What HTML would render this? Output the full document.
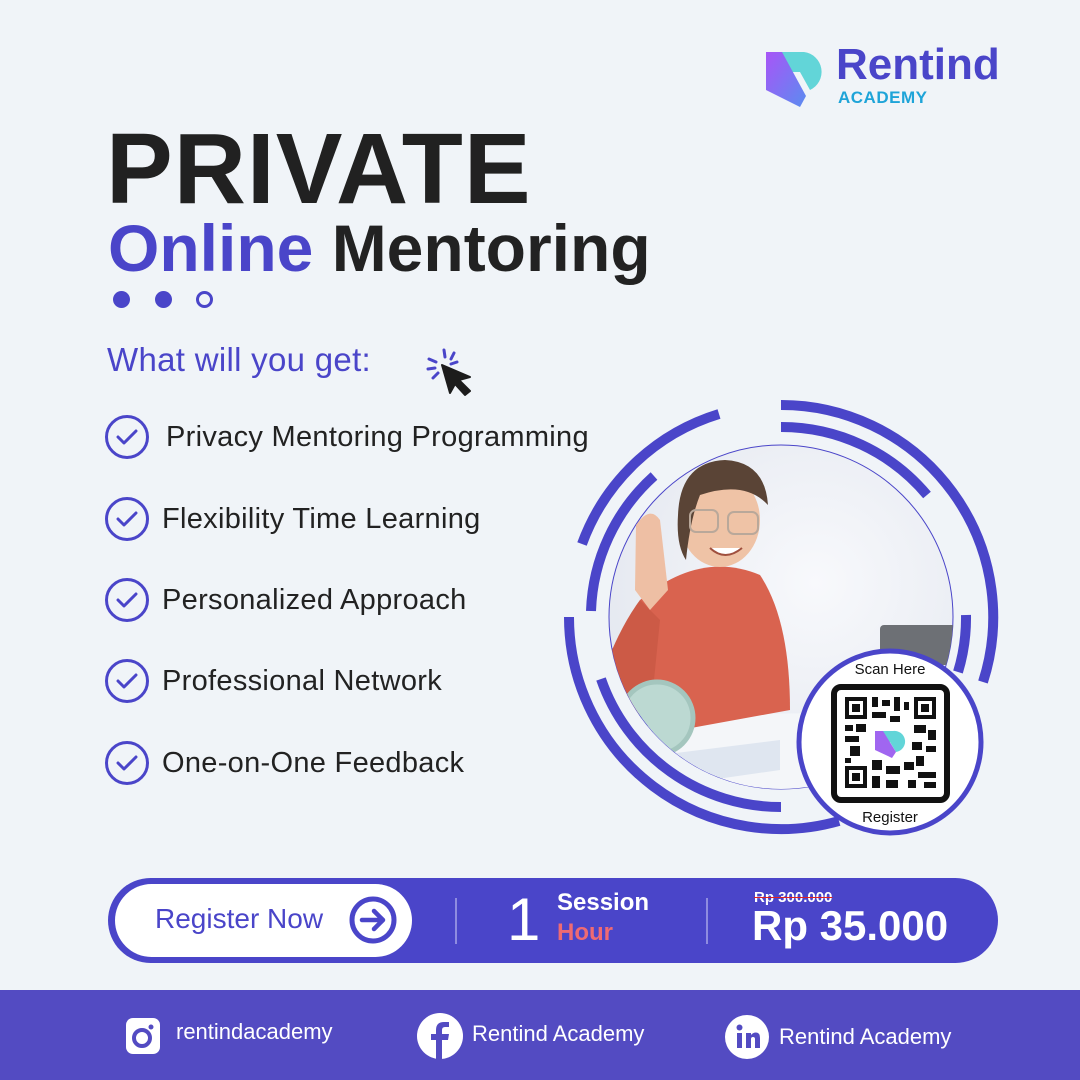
<!DOCTYPE html>
<html><head><meta charset="utf-8"><style>
*{margin:0;padding:0;box-sizing:border-box}
body{width:1080px;height:1080px;background:#f0f4f8;position:relative;overflow:hidden;font-family:"Liberation Sans",sans-serif}
.a{position:absolute;white-space:nowrap}
.item{position:absolute;left:104px;display:flex;align-items:center;font-size:29px;color:#222;letter-spacing:0.3px}
.item svg{margin-right:12px}
</style></head><body>

<!-- logo -->
<svg class="a" style="left:764px;top:50px" width="64" height="58" viewBox="0 0 64 58">
<defs><linearGradient id="lg" x1="0" y1="0" x2="1" y2="1"><stop offset="0" stop-color="#a855f7"/><stop offset="1" stop-color="#5b8cf0"/></linearGradient></defs>
<path d="M14 2 H40 A20 20 0 0 1 46 40 L36 22 H22 Z" fill="#62d5d8"/>
<path d="M2 2 H18 L42 46 L36 57 L2 40 Z" fill="url(#lg)"/>
</svg>
<div class="a" style="left:836px;top:40px;font-size:44px;font-weight:bold;color:#4a45c9">Rentind</div>
<div class="a" style="left:838px;top:88px;font-size:17px;font-weight:bold;color:#1ea4d8;letter-spacing:0.5px">ACADEMY</div>

<div class="a" style="left:106px;top:112px;font-size:100px;font-weight:bold;color:#212121;letter-spacing:1px">PRIVATE</div>
<div class="a" style="left:108px;top:210px;font-size:66px;font-weight:bold;color:#4a45c9;letter-spacing:0">Online <span style="color:#222">Mentoring</span></div>

<div class="a" style="left:113px;top:291px;width:17px;height:17px;border-radius:50%;background:#4a45c9"></div>
<div class="a" style="left:155px;top:291px;width:17px;height:17px;border-radius:50%;background:#4a45c9"></div>
<div class="a" style="left:196px;top:291px;width:17px;height:17px;border-radius:50%;border:3px solid #4a45c9"></div>

<div class="a" style="left:107px;top:341px;font-size:33px;color:#4a45c9;letter-spacing:0.3px">What will you get:</div>
<svg class="a" style="left:424px;top:347px" width="52" height="50" viewBox="0 0 52 50">
<g stroke="#4a45c9" stroke-width="3" stroke-linecap="round"><line x1="20" y1="3" x2="21" y2="10"/><line x1="30" y1="6" x2="27" y2="12"/><line x1="5" y1="12" x2="12" y2="15"/><line x1="4" y1="22" x2="11" y2="21"/><line x1="9" y1="31" x2="14" y2="26"/><line x1="33" y1="15" x2="27" y2="17"/></g>
<path d="M18 18 L46 30 L35 33 L46 44 L41 48 L31 37 L26 46 Z" fill="#1c1c1c" stroke="#1c1c1c" stroke-width="2" stroke-linejoin="round"/>
</svg>

<div class="item" style="top:414px"><svg width="46" height="46" viewBox="0 0 46 46"><circle cx="23" cy="23" r="20.5" fill="none" stroke="#4a45c9" stroke-width="3"/><path d="M14 23 L20 29 L32 17" fill="none" stroke="#4a45c9" stroke-width="3" stroke-linecap="round" stroke-linejoin="round"/></svg><span style="margin-left:4px">Privacy Mentoring Programming</span></div>
<div class="item" style="top:496px"><svg width="46" height="46" viewBox="0 0 46 46"><circle cx="23" cy="23" r="20.5" fill="none" stroke="#4a45c9" stroke-width="3"/><path d="M14 23 L20 29 L32 17" fill="none" stroke="#4a45c9" stroke-width="3" stroke-linecap="round" stroke-linejoin="round"/></svg>Flexibility Time Learning</div>
<div class="item" style="top:577px"><svg width="46" height="46" viewBox="0 0 46 46"><circle cx="23" cy="23" r="20.5" fill="none" stroke="#4a45c9" stroke-width="3"/><path d="M14 23 L20 29 L32 17" fill="none" stroke="#4a45c9" stroke-width="3" stroke-linecap="round" stroke-linejoin="round"/></svg>Personalized Approach</div>
<div class="item" style="top:658px"><svg width="46" height="46" viewBox="0 0 46 46"><circle cx="23" cy="23" r="20.5" fill="none" stroke="#4a45c9" stroke-width="3"/><path d="M14 23 L20 29 L32 17" fill="none" stroke="#4a45c9" stroke-width="3" stroke-linecap="round" stroke-linejoin="round"/></svg>Professional Network</div>
<div class="item" style="top:740px"><svg width="46" height="46" viewBox="0 0 46 46"><circle cx="23" cy="23" r="20.5" fill="none" stroke="#4a45c9" stroke-width="3"/><path d="M14 23 L20 29 L32 17" fill="none" stroke="#4a45c9" stroke-width="3" stroke-linecap="round" stroke-linejoin="round"/></svg>One-on-One Feedback</div>

<!-- rings + photo -->
<svg class="a" style="left:0;top:0" width="1080" height="1080" viewBox="0 0 1080 1080">
<defs>
<clipPath id="pc"><circle cx="781" cy="617" r="172"/></clipPath>
<radialGradient id="bgp" cx="0.6" cy="0.4" r="0.7"><stop offset="0" stop-color="#f8f9fc"/><stop offset="1" stop-color="#e3e7ef"/></radialGradient>
</defs>
<circle cx="781" cy="617" r="172" fill="url(#bgp)" stroke="#4a45c9" stroke-width="1"/>
<g clip-path="url(#pc)">
<rect x="880" y="625" width="80" height="40" rx="4" fill="#6d7075"/>
<path d="M600 740 Q700 700 960 720 L960 800 L600 800Z" fill="#f4f6f9"/>
<path d="M620 760 L780 740 L780 770 L640 790Z" fill="#dfe6f0"/>
<path d="M640 600 Q700 550 760 575 Q790 620 790 710 L680 730 Q630 720 610 680 Z" fill="#d9634f"/>
<path d="M640 600 Q625 620 612 650 L612 700 L650 720 L660 620Z" fill="#cc5a46"/>
<path d="M636 525 Q650 505 660 520 L668 590 L650 610 L635 590Z" fill="#eebfa4"/>
<ellipse cx="720" cy="520" rx="40" ry="47" fill="#efc3a6"/>
<path d="M678 515 Q680 462 725 460 Q765 462 768 505 Q745 480 700 495 Q690 520 686 560 Q676 545 678 515Z" fill="#5a4436"/>
<rect x="690" y="510" width="28" height="22" rx="6" fill="none" stroke="#b9a89a" stroke-width="2"/>
<rect x="728" y="512" width="30" height="22" rx="6" fill="none" stroke="#b9a89a" stroke-width="2"/>
<path d="M710 548 Q725 562 742 548" fill="#fff" stroke="#a0503e" stroke-width="2"/>
<circle cx="657" cy="718" r="36" fill="#bcd9d2" stroke="#a4c6be" stroke-width="5"/>
</g>
<g fill="none" stroke="#4a45c9" stroke-width="10">
<path d="M781 405 A212 212 0 0 1 983 682"/>
<path d="M839 821 A212 212 0 0 1 569 617"/>
<path d="M582 544 A212 212 0 0 1 719 414"/>
<path d="M781 427 A190 190 0 0 1 927 495"/>
<path d="M966 615 A185 185 0 0 1 958 672"/>
<path d="M654 476 A190 190 0 0 0 591 611"/>
<path d="M601 679 A190 190 0 0 0 781 807"/>
</g>
<circle cx="890" cy="742" r="91" fill="#fff" stroke="#4a45c9" stroke-width="5"/>
<rect x="834" y="687" width="113" height="113" rx="7" fill="#fff" stroke="#111" stroke-width="6"/>
<g fill="#111">
<rect x="845" y="697" width="22" height="22"/><rect x="914" y="697" width="22" height="22"/><rect x="845" y="766" width="22" height="22"/>
<rect x="872" y="697" width="6" height="10"/><rect x="882" y="700" width="8" height="6"/><rect x="894" y="697" width="6" height="14"/><rect x="904" y="702" width="5" height="8"/>
<rect x="845" y="725" width="8" height="6"/><rect x="856" y="724" width="10" height="8"/><rect x="845" y="736" width="14" height="6"/><rect x="850" y="746" width="10" height="10"/><rect x="845" y="758" width="6" height="5"/>
<rect x="872" y="712" width="14" height="6"/><rect x="890" y="716" width="10" height="6"/><rect x="872" y="760" width="10" height="10"/><rect x="886" y="766" width="14" height="8"/><rect x="872" y="776" width="8" height="12"/><rect x="886" y="780" width="12" height="8"/>
<rect x="914" y="725" width="12" height="8"/><rect x="928" y="730" width="8" height="10"/><rect x="912" y="742" width="10" height="8"/><rect x="926" y="746" width="10" height="6"/><rect x="916" y="756" width="8" height="10"/><rect x="904" y="762" width="10" height="8"/><rect x="918" y="772" width="18" height="6"/><rect x="908" y="780" width="8" height="8"/><rect x="924" y="782" width="12" height="6"/>
</g>
<g fill="#fff"><rect x="849" y="701" width="14" height="14"/><rect x="918" y="701" width="14" height="14"/><rect x="849" y="770" width="14" height="14"/></g>
<g fill="#111"><rect x="852" y="704" width="8" height="8"/><rect x="921" y="704" width="8" height="8"/><rect x="852" y="773" width="8" height="8"/></g>
<path d="M875 731 H893 A10 10 0 0 1 896 752 L890 742 H883 Z" fill="#62d5d8"/>
<path d="M875 731 H883 L896 752 L892 758 L875 750 Z" fill="#a066f0"/>
<text x="890" y="674" font-family="Liberation Sans" font-size="15" text-anchor="middle" fill="#111">Scan Here</text>
<text x="890" y="822" font-family="Liberation Sans" font-size="15" text-anchor="middle" fill="#111">Register</text>
</svg>

<!-- bottom bar -->
<div class="a" style="left:108px;top:878px;width:890px;height:85px;border-radius:43px;background:#4a45c9"></div>
<div class="a" style="left:115px;top:884px;width:297px;height:73px;border-radius:37px;background:#fff"></div>
<div class="a" style="left:155px;top:903px;font-size:28px;color:#4a45c9">Register Now</div>
<svg class="a" style="left:348px;top:895px" width="50" height="50" viewBox="0 0 50 50"><circle cx="25" cy="25" r="21" fill="none" stroke="#4a45c9" stroke-width="5"/><path d="M14 25 H34 M26 16 L35 25 L26 34" fill="none" stroke="#4a45c9" stroke-width="4.5" stroke-linecap="round" stroke-linejoin="round"/></svg>
<div class="a" style="left:455px;top:898px;width:2px;height:46px;background:#8f8ce0"></div>
<div class="a" style="left:706px;top:898px;width:2px;height:46px;background:#8f8ce0"></div>
<div class="a" style="left:507px;top:885px;font-size:60px;color:#fff">1</div>
<div class="a" style="left:557px;top:889px;font-size:24px;font-weight:bold;color:#fff">Session</div>
<div class="a" style="left:557px;top:919px;font-size:24px;font-weight:bold;color:#ef6a73">Hour</div>
<div class="a" style="left:754px;top:889px;font-size:15px;font-weight:bold;color:#fff;text-decoration:line-through;text-decoration-color:#e02020">Rp 300.000</div>
<div class="a" style="left:752px;top:902px;font-size:42px;font-weight:bold;color:#fff">Rp 35.000</div>

<!-- footer -->
<div class="a" style="left:0;top:990px;width:1080px;height:90px;background:#534bc2"></div>
<svg class="a" style="left:126px;top:1018px" width="34" height="36" viewBox="0 0 34 36"><rect x="0" y="0" width="34" height="36" rx="7" fill="#fff"/><circle cx="16" cy="20" r="8" fill="none" stroke="#534bc2" stroke-width="4"/><circle cx="25" cy="9" r="2.5" fill="#534bc2"/></svg>
<div class="a" style="left:176px;top:1019px;font-size:22px;color:#fff">rentindacademy</div>
<svg class="a" style="left:417px;top:1013px" width="46" height="46" viewBox="0 0 46 46"><circle cx="23" cy="23" r="23" fill="#fff"/><path d="M25 46 V27 H31 L32 21 H25 V17 Q25 14 28 14 H32 V9 H27 Q19 9 19 17 V21 H14 V27 H19 V46Z" fill="#534bc2"/></svg>
<div class="a" style="left:472px;top:1021px;font-size:22px;color:#fff">Rentind Academy</div>
<svg class="a" style="left:725px;top:1015px" width="44" height="44" viewBox="0 0 44 44"><circle cx="22" cy="22" r="22" fill="#fff"/><rect x="12" y="18" width="5" height="15" fill="#534bc2"/><circle cx="14.5" cy="12.5" r="3" fill="#534bc2"/><path d="M21 18 H26 V20 Q28 17.5 31 17.5 Q35 17.5 35 23 V33 H30 V24 Q30 22 28 22 Q26 22 26 24 V33 H21Z" fill="#534bc2"/></svg>
<div class="a" style="left:779px;top:1024px;font-size:22px;color:#fff">Rentind Academy</div>
</body></html>
